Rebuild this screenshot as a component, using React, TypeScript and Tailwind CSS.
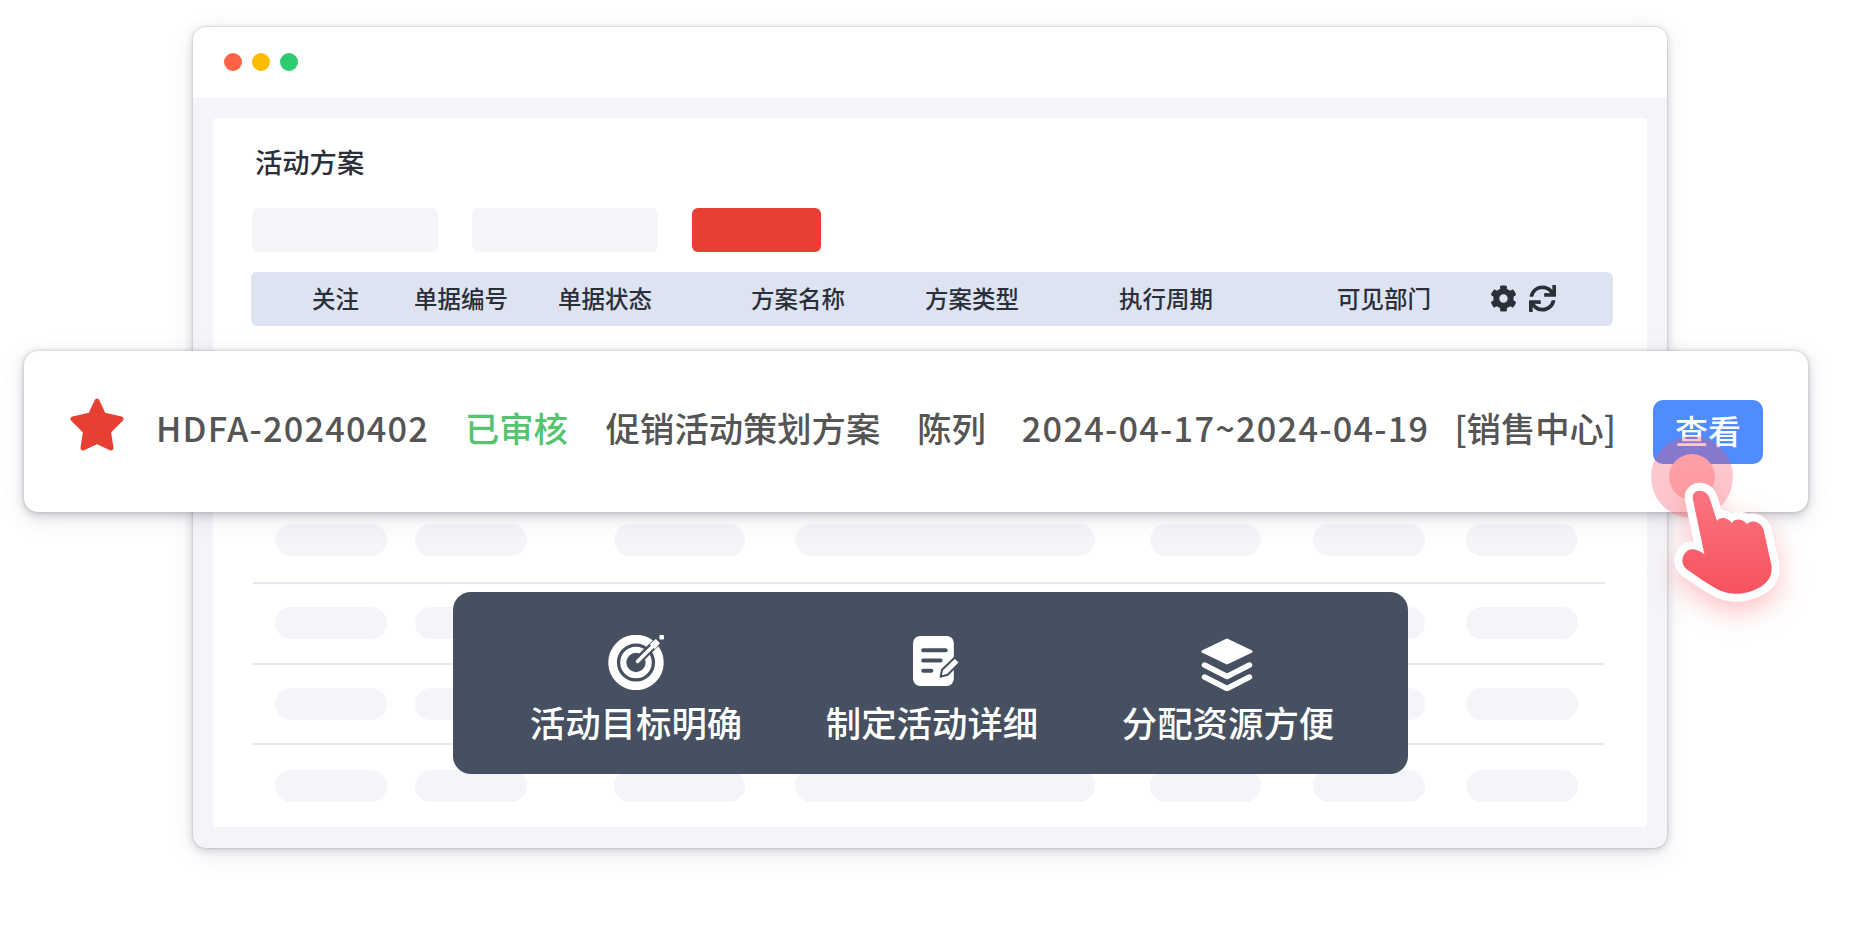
import { FaCog, FaSync } from "react-icons/fa";

const cjk = "font-['Noto_Sans_CJK_SC','Noto_Sans',sans-serif]";

const columns = ["关注", "单据编号", "单据状态", "方案名称", "方案类型", "执行周期", "可见部门"];

const pills = [
  "w-[112px] ml-[22px]",
  "w-[112px] ml-[28px]",
  "w-[131px] ml-[87px]",
  "w-[300px] ml-[50px]",
  "w-[111px] ml-[55px]",
  "w-[112px] ml-[52px]",
  "w-[112px] ml-[41px]",
];

function SkeletonRow() {
  return (
    <div className="flex">
      {pills.map((c) => (
        <div key={c} className={`h-[32px] rounded-[16px] bg-[#f4f5f9] ${c}`} />
      ))}
    </div>
  );
}

function TargetIcon() {
  return (
    <svg width="57" height="55" viewBox="0 0 56 54" fill="none">
      <circle cx="27.500" cy="27" r="23" stroke="#fff" strokeWidth="8.500" />
      <circle cx="27.500" cy="27" r="12.500" stroke="#fff" strokeWidth="6" />
      <path d="M27.500 27 47 8" stroke="#465060" strokeWidth="8" />
      <path d="M29 26 44 11" stroke="#fff" strokeWidth="3.500" strokeLinecap="round" />
      <path d="M41 9l6-5 4 4-5 6z" fill="#fff" />
      <rect x="50.500" y="0" width="4.500" height="4.500" rx="1" fill="#fff" />
    </svg>
  );
}

function NoteIcon() {
  return (
    <svg width="49" height="50" viewBox="0 0 48 49" fill="none">
      <rect x="0" y="0" width="40" height="49" rx="7" fill="#fff" />
      <path d="M10 14h22M10 24h17M10 34h8" stroke="#465060" strokeWidth="4" strokeLinecap="round" />
      <path d="M27 40l1.500-7L41 21l5 5-12 12z" fill="#fff" stroke="#465060" strokeWidth="2" strokeLinejoin="round" />
    </svg>
  );
}

function LayersIcon() {
  return (
    <svg width="52" height="53" viewBox="0 0 52 53" fill="none">
      <path d="M26 2 50 13.500 26 25 2 13.500z" fill="#fff" stroke="#fff" strokeWidth="3" strokeLinejoin="round" />
      <path d="M3.500 27 26 38.500 48.500 27M3.500 39 26 50.500 48.500 39" stroke="#fff" strokeWidth="5.500" strokeLinecap="round" strokeLinejoin="round" />
    </svg>
  );
}

function Feature({ icon, label, className }: { icon: React.ReactNode; label: string; className: string }) {
  return (
    <div className="flex w-[296px] flex-col items-center">
      <div className={`flex h-[58px] items-center ${className}`}>{icon}</div>
      <div className="mt-[7px] whitespace-nowrap text-[35.4px] leading-[48px] font-medium text-white">{label}</div>
    </div>
  );
}

export default function App() {
  return (
    <div className={`relative h-[950px] w-[1860px] overflow-hidden bg-white pl-[193px] pt-[27px] ${cjk}`}>
      {/* browser window */}
      <div className="flex h-[821px] w-[1474px] flex-col overflow-hidden rounded-[13px] bg-[#f4f5f9] shadow-[0_0_2px_rgba(90,90,120,0.4),0_2px_9px_rgba(60,60,80,0.22),0_6px_24px_rgba(60,60,80,0.1)]">
        <div className="flex h-[71px] shrink-0 items-center gap-[10px] bg-white pl-[31px] pb-[1px]">
          <span className="h-[18px] w-[18px] rounded-full bg-[#ff6347]" />
          <span className="h-[18px] w-[18px] rounded-full bg-[#ffbb00]" />
          <span className="h-[18px] w-[18px] rounded-full bg-[#2ecc71]" />
        </div>
        <div className="mx-[20px] mt-[20px] mb-[21px] flex-1 rounded-[4px] bg-white pl-[38px] pt-[25px]">
          <h1 className="ml-[4px] text-[27.3px] leading-[36px] font-medium text-[#2b2f3a]">活动方案</h1>
          <div className="mt-[29px] flex gap-[34px] pl-[1px]">
            <div className="h-[44px] w-[186px] rounded-[6px] bg-[#f4f5f9]" />
            <div className="h-[44px] w-[186px] rounded-[6px] bg-[#f4f5f9]" />
            <div className="h-[44px] w-[129px] rounded-[6px] bg-[#e74032]" />
          </div>
          <div className="mt-[20px] grid h-[54px] w-[1362px] grid-cols-[102px_144px_193px_174px_194px_218px_153px_39px_27px] items-center rounded-[6px] bg-[#dde3f0] pl-[61px] pb-[2px] text-[23.5px] font-medium text-[#2b2f3a]">
            {columns.map((c) => (
              <span key={c} className="whitespace-nowrap leading-[30px]">{c}</span>
            ))}
            <FaCog className="h-[27px] w-[27px]" />
            <FaSync className="h-[27px] w-[27px]" />
          </div>

          <div className="mt-[198px] w-[1392px] pl-[2px]">
            <SkeletonRow />
            <div className="mt-[26px] mb-[23px] h-[2px] w-[1352px] bg-[#e6e6ee]" />
            <SkeletonRow />
            <div className="mt-[24px] mb-[23px] h-[2px] w-[1352px] bg-[#e6e6ee]" />
            <SkeletonRow />
            <div className="mt-[23px] mb-[25px] h-[2px] w-[1352px] bg-[#e6e6ee]" />
            <SkeletonRow />
          </div>
        </div>
      </div>

      {/* highlighted row */}
      <div className="absolute left-[24px] top-[351px] flex h-[161px] w-[1784px] items-center rounded-[14px] bg-white pb-[7px] pl-[46px] text-[34.3px] font-medium text-[#555555] shadow-[0_0_3px_rgba(90,90,120,0.35),0_3px_10px_rgba(60,60,80,0.22),0_6px_24px_rgba(60,60,80,0.12)]">
        <svg width="54" height="54" viewBox="0 0 54 54" className="-mt-[7px] shrink-0">
          <polygon
            points="27,3 33.500,17 51,21 38.500,33.500 41,50 27,43.500 13,50 15.500,33.500 3,21 20.500,17"
            fill="#e74032"
            stroke="#e74032"
            strokeWidth="5"
            strokeLinejoin="round"
          />
        </svg>
        <span className="ml-[32px] whitespace-nowrap tracking-[1.2px]">HDFA-20240402</span>
        <span className="ml-[36px] whitespace-nowrap text-[#55c46e]">已审核</span>
        <span className="ml-[38px] whitespace-nowrap">促销活动策划方案</span>
        <span className="ml-[37px] whitespace-nowrap">陈列</span>
        <span className="ml-[36px] whitespace-nowrap tracking-[1.25px]">2024-04-17~2024-04-19</span>
        <span className="ml-[25px] whitespace-nowrap">[销售中心]</span>
        <div className="absolute left-[1629px] top-[49px] flex h-[64px] w-[110px] items-center justify-center rounded-[10px] bg-[#4e8cff] pb-[3px] text-[33px] text-white">
          查看
        </div>
      </div>

      {/* click ripple and pointer */}
      <div className="absolute left-[1651px] top-[436px] flex h-[82px] w-[82px] items-center justify-center rounded-full bg-[rgba(245,82,98,0.32)]">
        <div className="h-[46px] w-[46px] rounded-full bg-[#fe9fa5]" />
      </div>
      <svg
        className="absolute left-[1667px] top-[477px] h-[133px] w-[120px] overflow-visible drop-shadow-[0_10px_14px_rgba(240,80,90,0.35)]"
        viewBox="860 410 360 400"
      >
        <defs>
          <linearGradient id="hand" x1="0" y1="0" x2="0" y2="1">
            <stop offset="0" stopColor="#fc7580" />
            <stop offset="1" stopColor="#f5525e" />
          </linearGradient>
        </defs>
        <path
          d="M938 480C932 456 950 450 962 452C976 453 986 464 989 478L1010 542C1018 530 1040 530 1055 548C1062 534 1088 534 1100 552C1112 538 1140 542 1150 568L1172 668C1180 700 1168 726 1138 742C1100 762 1060 768 1020 752C990 738 950 710 922 690C900 674 902 650 918 634C932 622 950 628 972 642Z"
          fill="url(#hand)"
          stroke="#fff"
          strokeWidth="48"
          strokeLinejoin="round"
          paintOrder="stroke"
        />
      </svg>

      {/* features panel */}
      <div className="absolute left-[453px] top-[592px] flex h-[182px] w-[955px] items-start rounded-[18px] bg-[#465060] pl-[35px] pt-[41px]">
        <Feature icon={<TargetIcon />} label="活动目标明确" className="" />
        <Feature icon={<NoteIcon />} label="制定活动详细" className="ml-[11px] pb-[2px]" />
        <Feature icon={<LayersIcon />} label="分配资源方便" className="-ml-[2px] pt-[5px]" />
      </div>
    </div>
  );
}
